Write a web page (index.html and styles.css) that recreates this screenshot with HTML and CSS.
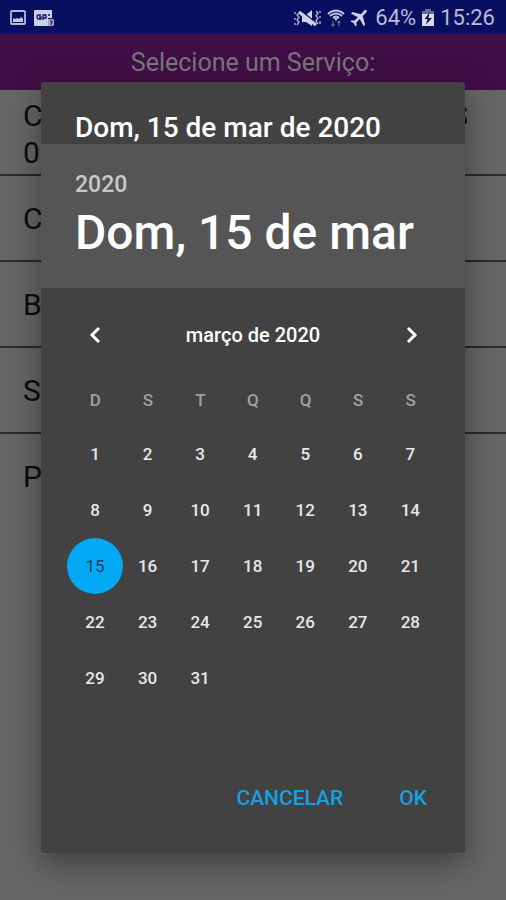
FILE: index.html
```
<!DOCTYPE html>
<html lang="pt-BR">
<head>
    <meta charset="utf-8">
    <meta name="viewport" content="width=device-width, initial-scale=1">
    <title>Selecione um Serviço</title>
    <link rel="stylesheet" href="styles.css">
</head>
<body>
    <div class="status">
        <svg class="icon-picture" width="16" height="16" viewBox="0 0 16 16">
            <rect x="1" y="1" width="14" height="13" rx="1" fill="none" stroke="#b4b7d6" stroke-width="1.8"/>
            <path d="M3 12V8l2 1 2-1 2 1 2-2 2 2v3z" fill="#c4c7e0"/>
        </svg>
        <svg class="icon-card" width="22" height="18" viewBox="0 0 22 18">
            <path d="M2 1h16q1 0 1 1v7h-4v8H2q-1 0-1-1V2q0-1 1-1z" fill="#ccceeb"/>
            <path d="M8 6H5.500q-1.500 0-1.500 2t1.500 2H8V8H6M10 11V6h3v3h-3M15 6h2" fill="none" stroke="#0a0f5c" stroke-width="1.300"/>
            <path d="M15 10h5l1 1v5l-1 1h-5z" fill="#a2a5cb"/>
            <path d="M17 12h2v2h-1v2" fill="none" stroke="#0a0f5c"/>
        </svg>
        <span class="space"></span>
        <svg width="28" height="18" viewBox="0 0 28 18">
            <path d="M8 6h4l6-5v16l-6-4H8z" fill="#d0d2e6"/>
            <path d="M7 2l16 13" stroke="#0a0f5c" stroke-width="2"/>
            <path d="M5 3l17 13" stroke="#d0d2e6" stroke-width="3"/>
            <path d="M5 4L3 6l2 2-2 3 2 2-2 3M1 3v2M1 9v2M1 14v2M22 2l2 2-2 3 2 2-2 3 2 3M26 2v2M26 7v2M26 12v3" fill="none" stroke="#aeb1d0" stroke-width="1.400"/>
        </svg>
        <svg width="18" height="18" viewBox="0 0 18 18">
            <path d="M1 5q8-7 16 0M3 7q6-5 12 0M6 9q3-3 6 0" fill="none" stroke="#c4c6df" stroke-width="1.800"/>
            <path d="M7 9h4l-2 3z" fill="#d0d2e6"/>
            <path d="M6 12v5M4.500 15.500L6 17l1.500-1.500M12 17v-5M10.500 13.500L12 12l1.500 1.500" fill="none" stroke="#696d9e" stroke-width="1.200"/>
        </svg>
        <svg width="18" height="18" viewBox="0 0 18 18">
            <path d="M16.500 1.200q1 1-.5 2.500l-3.300 3.400 2.400 8.600-1.500 1.300-3.800-7-3.500 3.500.4 2.700-1.300 1.200-1.700-3.300L.5 12.500l1.200-1.200 2.600.4 3.500-3.500L1 4.500 2.400 3l8.400 2.200L14 1.800q1.500-1.500 2.500-.6z" fill="#d0d2e6"/>
        </svg>
        <span class="level">64%</span>
        <svg width="14" height="18" viewBox="0 0 14 18">
            <path d="M4 0h6v2h3v15H1V2h3z" fill="#d8daea"/>
            <path d="M4 0h6v2h3v3H1V2h3z" fill="#686c98"/>
            <path d="M8.500 3.500L3.500 10h3L5 15.500 11 9H7.500z" fill="#11154c"/>
        </svg>
        <span class="clock">15:26</span>
    </div>

    <header class="header">Selecione um Serviço:</header>

    <ul class="services">
        <li><span class="line"><span>C</span><span>S</span></span>0</li>
        <li>C</li>
        <li>B</li>
        <li>S</li>
        <li>P</li>
    </ul>

    <div class="overlay">
        <div class="dialog" role="dialog" aria-labelledby="dialog-title">
            <h1 class="title" id="dialog-title">Dom, 15 de mar de 2020</h1>
            <div class="selected-date">
                <button type="button" class="year">2020</button>
                <button type="button" class="date">Dom, 15 de mar</button>
            </div>
            <div class="month">
                <button type="button" class="arrow" aria-label="Mês anterior">
                    <svg width="24" height="24" viewBox="0 0 24 24"><path d="M16 5L9 12l7 7"/></svg>
                </button>
                <span>março de 2020</span>
                <button type="button" class="arrow" aria-label="Próximo mês">
                    <svg width="24" height="24" viewBox="0 0 24 24"><path d="M9 5l7 7-7 7"/></svg>
                </button>
            </div>
            <table class="days">
                <thead>
                    <tr><th>D</th><th>S</th><th>T</th><th>Q</th><th>Q</th><th>S</th><th>S</th></tr>
                </thead>
                <tbody>
                    <tr>
                        <td><button type="button">1</button></td>
                        <td><button type="button">2</button></td>
                        <td><button type="button">3</button></td>
                        <td><button type="button">4</button></td>
                        <td><button type="button">5</button></td>
                        <td><button type="button">6</button></td>
                        <td><button type="button">7</button></td>
                    </tr>
                    <tr>
                        <td><button type="button">8</button></td>
                        <td><button type="button">9</button></td>
                        <td><button type="button">10</button></td>
                        <td><button type="button">11</button></td>
                        <td><button type="button">12</button></td>
                        <td><button type="button">13</button></td>
                        <td><button type="button">14</button></td>
                    </tr>
                    <tr>
                        <td><button type="button" class="selected">15</button></td>
                        <td><button type="button">16</button></td>
                        <td><button type="button">17</button></td>
                        <td><button type="button">18</button></td>
                        <td><button type="button">19</button></td>
                        <td><button type="button">20</button></td>
                        <td><button type="button">21</button></td>
                    </tr>
                    <tr>
                        <td><button type="button">22</button></td>
                        <td><button type="button">23</button></td>
                        <td><button type="button">24</button></td>
                        <td><button type="button">25</button></td>
                        <td><button type="button">26</button></td>
                        <td><button type="button">27</button></td>
                        <td><button type="button">28</button></td>
                    </tr>
                    <tr>
                        <td><button type="button">29</button></td>
                        <td><button type="button">30</button></td>
                        <td><button type="button">31</button></td>
                        <td></td>
                        <td></td>
                        <td></td>
                        <td></td>
                    </tr>
                </tbody>
            </table>
            <div class="actions">
                <button type="button">CANCELAR</button>
                <button type="button">OK</button>
            </div>
        </div>
    </div>
</body>
</html>
```

FILE: styles.css
```
*{
    box-sizing: border-box;
}
body{
    margin: 0;
    min-height: 100vh;
    position: relative;
    background-color: #666;
    font-family: Roboto, "Liberation Sans", sans-serif;
}
button{
    padding: 0;
    border: 0;
    background: none;
    color: inherit;
    font: inherit;
    cursor: pointer;
}
.status{
    display: flex;
    align-items: center;
    height: 34px;
    padding: 2px 11px 0 10px;
    gap: 5px;
    background-color: #080e60;
    color: #b9bbd5;
    font-size: 22px;
    line-height: 32px;
}
.icon-card{
    margin-left: 2px;
}
.level{
    margin-left: 2px;
}
.space{
    flex: 1;
}
.header{
    height: 56px;
    background-color: #400e46;
    color: #777;
    font-size: 25px;
    line-height: 58px;
    text-align: center;
}
.services{
    margin: 0;
    padding: 0;
    list-style: none;
    font-size: 30px;
    line-height: 37px;
    color: #0c0c0c;
}
.services li{
    padding: 24px 38px 23px 23px;
    border-bottom: 2px solid #2b2b2b;
}
.services li:first-child{
    padding-top: 7px;
    padding-bottom: 3px;
}
.services li:last-child{
    border-bottom: 0;
}
.line{
    display: flex;
    justify-content: space-between;
}
.overlay{
    position: absolute;
    inset: 34px 0 0;
    display: flex;
    align-items: center;
    padding: 0 41px;
}
.dialog{
    flex: 1;
    background-color: #424242;
    border-radius: 3px;
    color: #fff;
    font-weight: 500;
    box-shadow: 0 10px 32px rgba(0,0,0,0.4);
}
.title{
    margin: 0;
    padding: 30px 34px 0;
    font-size: 28px;
    line-height: 32px;
    font-weight: 500;
}
.selected-date{
    display: flex;
    flex-direction: column;
    align-items: flex-start;
    padding: 25px 34px 23px;
    background-color: #555;
}
.year{
    color: #c8c8c8;
    font-size: 23px;
    line-height: 32px;
}
.date{
    font-size: 48px;
    line-height: 64px;
}
.month{
    display: flex;
    align-items: center;
    justify-content: space-between;
    height: 80px;
    margin-top: 7px;
    padding: 0 28px;
    font-size: 20px;
}
.arrow{
    width: 52px;
    height: 48px;
}
.arrow svg{
    display: block;
    margin: 0 auto;
    fill: none;
    stroke: #fff;
    stroke-width: 3;
}
.days{
    width: calc(100% - 56px);
    margin: 0 28px;
    border-collapse: collapse;
    table-layout: fixed;
    font-size: 17px;
}
.days th{
    height: 51px;
    padding: 0;
    color: #a0a0a0;
    font-weight: 500;
}
.days td{
    height: 56px;
    padding: 0;
    color: #e8e8e8;
}
.days button{
    display: block;
    width: 56px;
    height: 56px;
    margin: 0 -2px;
    border-radius: 50%;
}
.days .selected{
    background-color: #03a9f4;
    color: #14415a;
    font-weight: 400;
}
.actions{
    display: flex;
    justify-content: flex-end;
    gap: 24px;
    padding: 68px 22px 31px;
    color: #169fe3;
    font-size: 21px;
}
.actions button{
    height: 48px;
    padding: 0 16px;
}
```
